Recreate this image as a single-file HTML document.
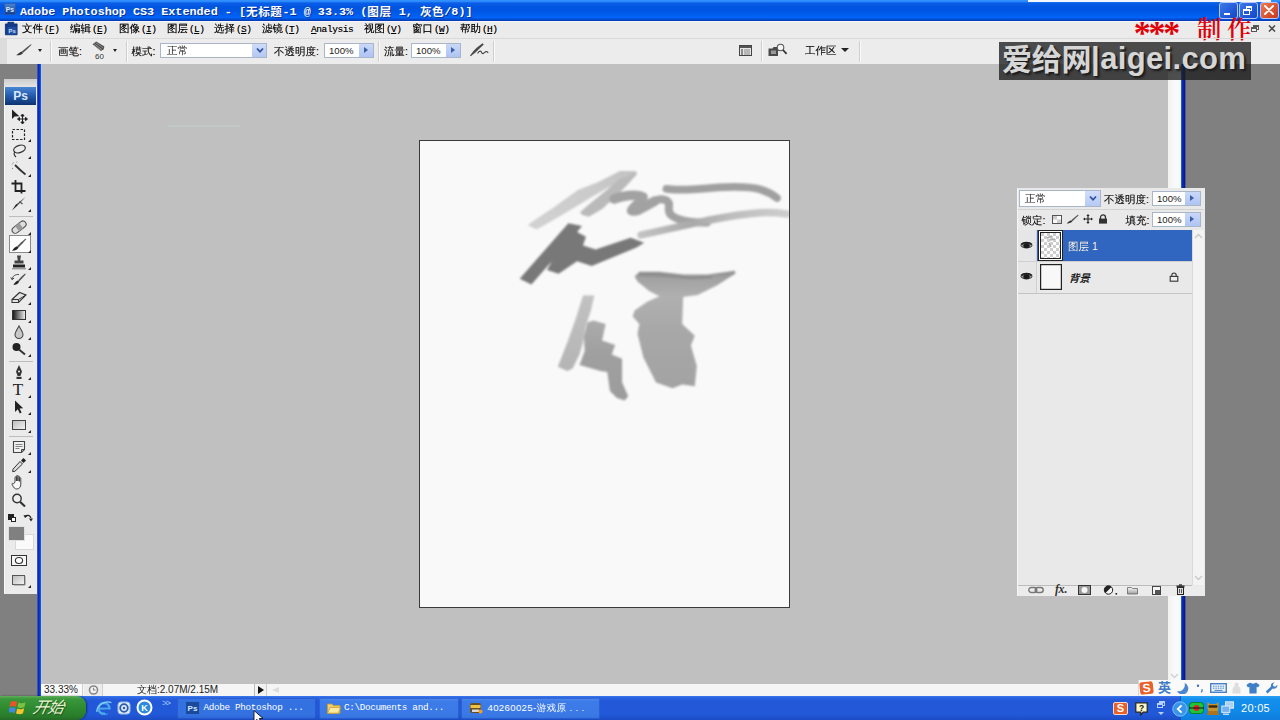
<!DOCTYPE html>
<html lang="zh-CN">
<head>
<meta charset="utf-8">
<title>Adobe Photoshop CS3 Extended</title>
<style>
html,body{margin:0;padding:0;}
body{width:1280px;height:720px;overflow:hidden;position:relative;background:#808080;
 font-family:"Liberation Sans","WenQuanYi Zen Hei","Noto Sans CJK SC",sans-serif;font-size:11px;color:#111;}
.abs{position:absolute;}
#titlebar{left:0;top:0;width:1280px;height:21px;background:linear-gradient(#3494ff 0,#2a88fb 1.5px,#0a5ee8 3px,#0054de 7px,#0058e6 12px,#0064f8 17.5px,#0450d8 19px,#0340b8 20.5px,#0340b8 21px);}
#titletext{left:20px;top:3px;height:17px;line-height:17px;color:#fff;font-family:"Liberation Mono","Noto Sans CJK SC",monospace;font-weight:bold;font-size:11.78px;white-space:nowrap;text-shadow:1px 1px 0 rgba(8,36,130,0.8);}
#titletext i{font-style:normal;font-size:11.6px;letter-spacing:0.6px;position:relative;top:1px;font-family:"Liberation Mono","Noto Sans CJK SC",monospace;font-weight:bold;}
#menubar{left:0;top:21px;width:1280px;height:17px;background:#ebebeb;border-top:1px solid #f6f6fc;box-sizing:border-box;}
#optbar{left:0;top:38px;width:1280px;height:26px;background:#ececec;}
#work{left:41px;top:64px;width:1127px;height:621px;background:#c0c0c0;}
#leftblue{left:37px;top:64px;width:5px;height:632px;background:linear-gradient(to right,#6e78b0 0,#0c2cb0 1px,#0628c0 2px,#0c4ad8 3px,#2a5ccc 4px,#b4c6e8 4.2px,#b8c8e4 5px);}
#rightscroll{left:1168px;top:64px;width:13px;height:621px;background:linear-gradient(to right,#f2f2ee 0,#f6f8fb 45%,#f8fcf6 70%,#eefcff 100%);}
#rightblue{left:1181px;top:64px;width:4.5px;height:632px;background:linear-gradient(to right,#4a6ad0 0,#0a2cb0 1.5px,#06209c 3px,#0a1c78 4px,#50588c 4.5px);}
#statusbar{left:41px;top:685px;width:1140px;height:11px;background:#f4f4f4;}
#taskbar{left:0;top:696px;width:1280px;height:24px;background:#2a62de;}
#doc{left:419px;top:140px;width:369px;height:466px;background:#f9f9f9;border:1px solid #3a3a3a;}
#toolbox{left:4px;top:79px;width:33px;height:514.5px;background:#ececec;}
#layers{left:1017px;top:188px;width:187px;height:408px;background:#e9e9e9;}

.t{position:absolute;white-space:nowrap;line-height:14px;height:14px;}
.mi,.ol,.lt{text-shadow:0 0 0.5px rgba(0,0,0,0.55);}
.mi{position:absolute;top:21px;height:14px;line-height:14px;font-size:10.5px;white-space:nowrap;color:#000;}
.mi b{font-weight:normal;font-family:"Liberation Mono","DejaVu Sans Mono",monospace;font-size:9.5px;letter-spacing:-0.6px;margin-left:1px;}
.mi u{text-decoration:underline;}
.ol{position:absolute;top:44px;height:14px;line-height:14px;font-size:10.5px;white-space:nowrap;color:#1a1a1a;}
.sep{position:absolute;top:41px;width:1px;height:21px;background:#cfcfcf;box-shadow:1px 0 0 #fafafa;}
.fld{position:absolute;top:43px;height:14px;background:#fff;border:1px solid #a9b6c9;box-sizing:border-box;height:15px;}
.fld .v{position:absolute;left:4px;top:0;line-height:13px;font-size:9.6px;color:#222;}
.fld .ab{position:absolute;right:0;top:0;bottom:0;width:14px;background:linear-gradient(#c9d8f8,#aec4f3);}
.fld .ab:after{content:"";position:absolute;left:5px;top:3px;border-left:4px solid #3a5ea8;border-top:3.5px solid transparent;border-bottom:3.5px solid transparent;}
.dd{position:absolute;width:0;height:0;border-top:3px solid #222;border-left:2.5px solid transparent;border-right:2.5px solid transparent;}
.wb{position:absolute;top:2px;width:18.5px;height:16.5px;border-radius:3px;box-sizing:border-box;border:1px solid #b4c8f6;}
</style>
</head>
<body>
<div id="titlebar" class="abs"></div>
<div id="titletext" class="abs">Adobe Photoshop CS3 Extended - [<i>无标题</i>-1 @ 33.3% (<i>图层</i> 1, <i>灰色</i>/8)]</div>
<div id="menubar" class="abs"></div>
<div id="optbar" class="abs"></div>

<div id="work" class="abs"></div>
<div id="leftblue" class="abs"></div>
<div id="rightscroll" class="abs"></div>
<div id="rightblue" class="abs"></div>
<div id="statusbar" class="abs"></div>
<div id="taskbar" class="abs"></div>
<div id="doc" class="abs"></div>
<div id="toolbox" class="abs"></div>
<div id="layers" class="abs"></div>

<!-- ===== painting on canvas ===== -->
<svg class="abs" style="left:420px;top:141px" width="369" height="466" viewBox="420 141 369 466">
<defs><filter id="bl" x="-5%" y="-5%" width="110%" height="110%"><feGaussianBlur stdDeviation="0.9"/></filter>
<filter id="bl2" x="-5%" y="-5%" width="110%" height="110%"><feGaussianBlur stdDeviation="1.4"/></filter>
<linearGradient id="ga" x1="0" y1="1" x2="1" y2="0"><stop offset="0" stop-color="#d2d2d2"/><stop offset="0.6" stop-color="#cbcbcb"/><stop offset="1" stop-color="#c2c2c2"/></linearGradient>
<linearGradient id="ge" x1="0" y1="0" x2="1" y2="0"><stop offset="0" stop-color="#c2c2c2"/><stop offset="0.35" stop-color="#a9a9a9"/><stop offset="0.6" stop-color="#bcbcbc"/><stop offset="1" stop-color="#cdcdcd"/></linearGradient>
<linearGradient id="gg" x1="0" y1="0" x2="0" y2="1"><stop offset="0" stop-color="#8e8e8e"/><stop offset="0.3" stop-color="#a2a2a2"/><stop offset="1" stop-color="#b0b0b0"/></linearGradient>
<linearGradient id="gj" x1="0" y1="0" x2="0" y2="1"><stop offset="0" stop-color="#ababab"/><stop offset="0.4" stop-color="#a0a0a0"/><stop offset="1" stop-color="#9c9c9c"/></linearGradient>
<linearGradient id="gh" x1="0" y1="0" x2="0" y2="1"><stop offset="0" stop-color="#b0b0b0"/><stop offset="0.35" stop-color="#a8a8a8"/><stop offset="1" stop-color="#a3a3a3"/></linearGradient>
<linearGradient id="gi" x1="0" y1="0" x2="0" y2="1"><stop offset="0" stop-color="#c2c2c2"/><stop offset="1" stop-color="#b4b4b4"/></linearGradient>
</defs>
<g filter="url(#bl)">
<path d="M528.9 223.9L553.3 207.8L577.8 190L597.8 182.2L620 171.1L635.6 171.1L637 174L607.8 187.8L592.2 196.7L577.8 205.6L558.9 216.7L536.7 229.4L528.3 225.6z" fill="url(#ga)"/>
<path d="M580 212.2L588.9 204.4L607.8 188.9L620 178.9L636.7 172.2L636.7 174.4L626.7 185.6L616.7 195.6L602.2 208.9L588.9 216.7L582.2 215z" fill="#bababa"/>
<path d="M614 199C622 196 636 193.5 643 197C642 201 634 206 631.5 210.5C636 213 644 207 655 201" fill="none" stroke="#a2a2a2" stroke-width="9.5" stroke-linejoin="round" stroke-linecap="round"/>
<path d="M655 201C660 198.5 667 198.5 669 203.5C669.5 208 667 211 671 215C677 220 690 222.6 707 222.6" fill="none" stroke="#a2a2a2" stroke-width="8" stroke-linejoin="round" stroke-linecap="round"/>
<path d="M666.5 188.8C675 190.5 690 190 718.5 187.4C735 186.5 750 186.7 760.5 189.5C767 191.5 772 194 777 198" fill="none" stroke="#a0a0a0" stroke-width="7.7" stroke-linecap="round"/>
<path d="M641 235C655 232 676 227.5 707 220.5C730 216 748 213.5 760.5 212.7C770 212.3 780 213 787 214" fill="none" stroke="url(#ge)" stroke-width="7.4" stroke-linecap="round"/>
<path d="M519.7 278.7L568.4 223.2L582 226.1L577.1 232L585.9 236.8L583 245.6L595.6 249.5L630.6 237.8L644.2 242.7L636.5 247.5L591.7 266L577.1 261.2L558.6 273.8L547 269.9L551.8 261.2L531.4 284.5z" fill="#787878"/>
<path d="M634.6 276.5L639.4 271.7L658.9 271.7L684.1 274.6L707.4 274.6L734.7 270.7L735.6 273.6L717.2 285.3L697.7 295L682.2 296.9L660.8 296.9L649.1 291.1L637.5 281.4z" fill="url(#gg)"/>
<path d="M639 274.5L660 275L690 278L712 277" fill="none" stroke="#8c8c8c" stroke-width="2.6"/>
<path d="M658.9 296.5L683.2 296.5L682.2 324.1L694.8 335.8L690.9 345.5L696.8 365.9L694.8 386.3L682.2 384.4L672.5 388.3L656 382.4L643.3 357.2L637.5 333.8L639.4 324.1L632.6 316.4L634.6 310.5L647.2 301.8z" fill="url(#gh)"/>
<path d="M583 295.4L594.3 295.4L590.8 311L585.6 326.7L583 342.3L579.5 354.5L572.6 368.4L567.4 371L557.8 366.7L567.4 342.3L576 318z" fill="url(#gi)"/>
<path d="M587.4 322.4L593.4 320.6L605.6 324.1L602.1 340.6L615.2 344.9L611.7 354.5L622.1 358.8L622.1 382.3L628.2 396.2L624.7 400.5L616.9 397.9L609.9 391L607.3 371.9L600.4 371L579.5 364.9L584.7 351L583.9 337.1z" fill="url(#gj)"/>
</g>
</svg>


<!-- ===== toolbox ===== -->
<style>
#toolbox{background:#ebebeb;border-left:1px solid #f8f8f8;box-sizing:border-box;}
.tl{position:absolute;left:4px;width:33px;height:18px;}
.tl svg{position:absolute;left:6px;top:1px;}
.tri{position:absolute;left:24px;top:14px;width:0;height:0;border-bottom:3px solid #222;border-left:3px solid transparent;}
.tsep{position:absolute;left:9px;width:24px;height:1px;background:#bdbdbd;}
</style>
<div class="abs" style="left:4px;top:79px;width:33px;height:8px;background:linear-gradient(#cdcdcd,#e4e4e4)"></div>
<div class="abs" style="left:5px;top:87px;width:31px;height:18px;background:linear-gradient(#4a86d2 0,#2a62b4 40%,#17468f 75%,#0e3270 100%);"></div>
<div class="abs" style="left:5px;top:87px;width:31px;height:18px;line-height:18px;text-align:center;color:#dbe8fc;font-weight:bold;font-size:12px;font-family:'Liberation Sans',sans-serif;">Ps</div>

<div class="tl" style="top:107px"><svg width="18" height="16" viewBox="0 0 18 16"><path d="M2 1.5L2 11L4.6 8.6L9.4 8.2z" fill="#222"/><path d="M12.5 7v8M8.5 11h8M12.5 6l-1.6 2h3.2zM12.5 16l-1.6-2h3.2zM7.5 11l2-1.6v3.2zM17.5 11l-2-1.6v3.2z" stroke="#222" stroke-width="1" fill="#222"/></svg></div>
<div class="tl" style="top:125px"><svg width="18" height="16" viewBox="0 0 18 16"><rect x="2.5" y="3.5" width="12" height="10" fill="none" stroke="#222" stroke-width="1.2" stroke-dasharray="2.4 1.6"/></svg><div class="tri"></div></div>
<div class="tl" style="top:142px"><svg width="18" height="16" viewBox="0 0 18 16"><ellipse cx="9.5" cy="6" rx="6" ry="3.6" fill="none" stroke="#333" stroke-width="1.2" transform="rotate(-18 9.5 6)"/><path d="M5 8.5C3.5 10.5 4 12.5 6 14" fill="none" stroke="#333" stroke-width="1.2"/></svg><div class="tri"></div></div>
<div class="tl" style="top:160px"><svg width="18" height="16" viewBox="0 0 18 16"><path d="M5 4C8 7 11 10 15.5 13.5" fill="none" stroke="#333" stroke-width="1.8"/><path d="M2 3.5L4 1M3 7L1.5 8.5M6.5 1.5L7 0.5" stroke="#888" stroke-width="1" stroke-dasharray="1.5 1"/></svg><div class="tri"></div></div>
<div class="tl" style="top:178px"><svg width="18" height="16" viewBox="0 0 18 16"><path d="M5.5 1v11h10M1.5 4.5h10v10" fill="none" stroke="#222" stroke-width="1.8"/></svg></div>
<div class="tl" style="top:195px"><svg width="18" height="16" viewBox="0 0 18 16"><path d="M15.5 1L8 9L6.5 8.2z" fill="#444"/><path d="M8 9L2 14.5L6.2 8z" fill="#222"/><path d="M9.5 5.5L12.5 8" stroke="#555" stroke-width="1.2"/></svg><div class="tri"></div></div>
<div class="tsep" style="top:216px"></div>
<div class="tl" style="top:218px"><svg width="18" height="16" viewBox="0 0 18 16"><rect x="1" y="5" width="16" height="6.4" rx="3.2" fill="#ddd" stroke="#555" stroke-width="1.1" transform="rotate(-38 9 8)"/><rect x="6.5" y="5" width="5" height="6.4" fill="#999" transform="rotate(-38 9 8)"/></svg><div class="tri"></div></div>
<div class="abs" style="left:9px;top:235px;width:22px;height:18px;background:#fdfdfd;border:1px solid #8a8a8a;box-sizing:border-box"></div>
<div class="tl" style="top:236px"><svg width="18" height="16" viewBox="0 0 18 16"><path d="M15.5 1.5C12 4.5 9.5 6.8 7.2 9.2L8.6 10.4C11 8 13.4 5.4 16.2 2.2z" fill="#555"/><path d="M7 9.2C5.2 9.8 3.6 11.4 2 13.8 4.8 14 7.2 12.8 8.6 10.5z" fill="#222"/></svg><div class="tri"></div></div>
<div class="tl" style="top:253px"><svg width="18" height="16" viewBox="0 0 18 16"><path d="M7 1.5h4l-0.8 5h3.3v3h-9v-3h3.3z" fill="#444"/><rect x="3" y="10.5" width="12" height="3" fill="#222"/><path d="M2 14.8h14" stroke="#777" stroke-width="1"/></svg><div class="tri"></div></div>
<div class="tl" style="top:271px"><svg width="18" height="16" viewBox="0 0 18 16"><path d="M15 1.5C12 4 10 6 8 8.6L9.2 9.6C11.4 7.2 13.4 5 15.8 2.2z" fill="#555"/><path d="M7.8 8.6C6 9.4 4.6 10.8 3.4 13 5.8 13 8 12 9.2 9.8z" fill="#222"/><path d="M2 7.5C2.5 4 5.5 2 9 2.6M2 7.5L0.8 5.4M2 7.5L4 6.2" fill="none" stroke="#444" stroke-width="1"/></svg><div class="tri"></div></div>
<div class="tl" style="top:288px"><svg width="18" height="16" viewBox="0 0 18 16"><path d="M2 10.5L9.5 3.5L16 6L8.5 13.5L2 13.5z" fill="#e4e4e4" stroke="#333" stroke-width="1.1"/><path d="M2 10.5L8.5 10.5L8.5 13.5M8.5 10.5L16 6" fill="none" stroke="#333" stroke-width="1"/></svg><div class="tri"></div></div>
<div class="tl" style="top:306px"><svg width="18" height="16" viewBox="0 0 18 16"><defs><linearGradient id="tg" x1="0" y1="0" x2="1" y2="0"><stop offset="0" stop-color="#111"/><stop offset="1" stop-color="#f4f4f4"/></linearGradient></defs><rect x="2.5" y="3.5" width="13" height="9" fill="url(#tg)" stroke="#333"/></svg><div class="tri"></div></div>
<div class="tl" style="top:323px"><svg width="18" height="16" viewBox="0 0 18 16"><path d="M9 2C11 6 13 8 13 10.5A4 4 0 0 1 5 10.5C5 8 7 6 9 2z" fill="#c8c8c8" stroke="#444" stroke-width="1.1"/></svg><div class="tri"></div></div>
<div class="tl" style="top:340px"><svg width="18" height="16" viewBox="0 0 18 16"><circle cx="6.5" cy="6" r="4" fill="#222"/><path d="M9 8.5L15 13.5" stroke="#333" stroke-width="2"/></svg><div class="tri"></div></div>
<div class="tsep" style="top:361px"></div>
<div class="tl" style="top:363px"><svg width="18" height="16" viewBox="0 0 18 16"><path d="M9 1L12 7.5L10.4 12h-2.8L6 7.5z" fill="#333"/><circle cx="9" cy="7.6" r="1" fill="#eee"/><rect x="6.5" y="12.8" width="5" height="2.2" fill="#333"/></svg><div class="tri"></div></div>
<div class="tl" style="top:381px"><div class="abs" style="left:5px;top:0;width:18px;height:18px;line-height:18px;text-align:center;font-family:'Liberation Serif',serif;font-size:17px;color:#222;">T</div><div class="tri"></div></div>
<div class="tl" style="top:398px"><svg width="18" height="16" viewBox="0 0 18 16"><path d="M5 1.5L5 13L7.8 10.2L9.8 14.5L11.6 13.6L9.6 9.5L13.2 9.2z" fill="#222"/></svg><div class="tri"></div></div>
<div class="tl" style="top:416px"><svg width="18" height="16" viewBox="0 0 18 16"><defs><linearGradient id="tr" x1="0" y1="0" x2="1" y2="1"><stop offset="0" stop-color="#bbb"/><stop offset="1" stop-color="#f4f4f4"/></linearGradient></defs><rect x="2.5" y="3.5" width="13" height="9" fill="url(#tr)" stroke="#444"/></svg><div class="tri"></div></div>
<div class="tsep" style="top:436px"></div>
<div class="tl" style="top:438px"><svg width="18" height="16" viewBox="0 0 18 16"><path d="M3.5 2.5h11v8l-3 3h-8z" fill="#f0f0f0" stroke="#444" stroke-width="1.1"/><path d="M5.5 5.5h7M5.5 7.5h7M5.5 9.5h4" stroke="#777" stroke-width="0.9"/><path d="M14.5 10.5h-3v3" fill="none" stroke="#444"/></svg><div class="tri"></div></div>
<div class="tl" style="top:456px"><svg width="18" height="16" viewBox="0 0 18 16"><path d="M11 3.5L13.5 1L16 3.5L13.5 6z" fill="#222"/><path d="M10 4.5L12.5 7L5 14.2L2.6 14.6L3 12.2z" fill="#ddd" stroke="#333" stroke-width="1"/></svg><div class="tri"></div></div>
<div class="tl" style="top:473px"><svg width="18" height="16" viewBox="0 0 18 16"><path d="M5 8V3.5c0-1 1.4-1 1.4 0V7V2.2c0-1 1.5-1 1.5 0V7V2.8c0-1 1.5-1 1.5 0V7.4V4.4c0-1 1.4-1 1.4 0V10c0 3-1.4 5-4 5c-2.2 0-3-1.2-4.6-4.4c-0.6-1.2 0.6-1.8 1.4-0.8z" fill="#f8f8f8" stroke="#333" stroke-width="0.9"/></svg></div>
<div class="tl" style="top:491px"><svg width="18" height="16" viewBox="0 0 18 16"><circle cx="7" cy="6.5" r="4.2" fill="#eee" stroke="#333" stroke-width="1.4"/><path d="M10 9.8L15 14.5" stroke="#333" stroke-width="2.2"/></svg></div>
<div class="abs" style="left:8px;top:513.5px;width:6px;height:6px;background:#222"></div><div class="abs" style="left:11px;top:516.5px;width:5px;height:5px;background:#fff;border:1px solid #222;box-sizing:border-box"></div>
<svg class="abs" style="left:23px;top:512.5px" width="10" height="10" viewBox="0 0 10 10"><path d="M2 3.5C4 1.5 7 2 8 5" fill="none" stroke="#222" stroke-width="1.2"/><path d="M0.5 2L2 5L4.5 3zM6 5.5h4l-2 3z" fill="#222"/></svg>
<div class="abs" style="left:15px;top:534px;width:19px;height:16px;background:#fafafa;border:1px solid #d8d8d8;box-sizing:border-box"></div>
<div class="abs" style="left:8px;top:526px;width:17px;height:15px;background:#808080;border:1px solid #e0e0e0;box-sizing:border-box"></div>
<div class="tl" style="top:551px"><svg width="18" height="16" viewBox="0 0 18 16"><rect x="1.5" y="3.5" width="15" height="10" fill="#f6f6f6" stroke="#333"/><ellipse cx="9" cy="8.5" rx="3.6" ry="3" fill="#fff" stroke="#333" stroke-width="1.1"/></svg></div>
<div class="tl" style="top:571px"><svg width="18" height="16" viewBox="0 0 18 16"><rect x="2.5" y="3.5" width="12" height="9" fill="url(#tr)" stroke="#555"/><path d="M15 4.5v8.5h-11" fill="none" stroke="#888" stroke-width="1"/></svg><div class="tri"></div></div>


<!-- ===== layers panel ===== -->
<style>
#layers{left:1017px;top:188px;width:188px;height:408px;background:#e9e9e9;border-left:1px solid #f6f6f6;box-sizing:border-box;}
.lt{position:absolute;white-space:nowrap;font-size:10.5px;line-height:14px;height:14px;color:#1a1a1a;}
.lf{position:absolute;height:15px;background:#fff;border:1px solid #a9b6c9;box-sizing:border-box;}
.lf .v{position:absolute;left:4px;top:0;line-height:13px;font-size:9.6px;color:#222;}
.lf .ab{position:absolute;right:0;top:0;bottom:0;width:15px;background:linear-gradient(#c9d8f8,#aec4f3);}
.fld .nod:after,.lf .nod:after{display:none !important;}
.lf .ab:after{content:"";position:absolute;left:5px;top:3px;border-left:4px solid #3a5ea8;border-top:3.5px solid transparent;border-bottom:3.5px solid transparent;}
</style>
<div class="lf" style="left:1019px;top:190px;width:82px;height:17px"><span class="v" style="left:5px;top:1px;font-size:10.5px">正常</span><div class="ab nod" style="width:15px;background:linear-gradient(#d2defa,#b6c9f4)"></div></div>
<svg class="abs" style="left:1089px;top:195px" width="8" height="7" viewBox="0 0 8 7"><path d="M1 1.5L4 4.8L7 1.5" fill="none" stroke="#2c4f9e" stroke-width="1.7"/></svg>
<div class="lt" style="left:1104px;top:191.5px">不透明度:</div>
<div class="lf" style="left:1152px;top:190.5px;width:49px"><span class="v">100%</span><div class="ab"></div></div>
<div class="abs" style="left:1018px;top:208.5px;width:186px;height:1px;background:#d2d2d2"></div>
<div class="lt" style="left:1021.5px;top:213px">锁定:</div>
<svg class="abs" style="left:1052px;top:215px" width="10" height="9" viewBox="0 0 10 9"><rect x="0.5" y="0.5" width="9" height="8" fill="#fafafa" stroke="#555"/><rect x="1" y="1" width="4" height="3.5" fill="#ccc"/><rect x="5" y="4.5" width="4" height="3.5" fill="#ccc"/></svg>
<svg class="abs" style="left:1066px;top:214px" width="13" height="10" viewBox="0 0 13 10"><path d="M12 0.8C9 3 7 4.6 5.4 6.2L6.4 7.2C8.2 5.6 10.2 3.6 12.6 1.4z" fill="#555"/><path d="M5.2 6.2C3.6 6.6 2.2 7.8 0.8 9.4 3.2 9.6 5.2 8.8 6.4 7.3z" fill="#333"/></svg>
<svg class="abs" style="left:1083px;top:214px" width="10" height="10" viewBox="0 0 10 10"><path d="M5 1v8M1 5h8" stroke="#222" stroke-width="1.2"/><path d="M5 0L3.4 2h3.2zM5 10L3.4 8h3.2zM0 5l2-1.6v3.2zM10 5l-2-1.6v3.2z" fill="#222"/></svg>
<svg class="abs" style="left:1098px;top:214px" width="10" height="10" viewBox="0 0 10 10"><path d="M2.5 5V3.4a2.5 2.5 0 0 1 5 0V5" fill="none" stroke="#333" stroke-width="1.3"/><rect x="1" y="4.6" width="8" height="5" fill="#333"/></svg>
<div class="lt" style="left:1125.5px;top:213px">填充:</div>
<div class="lf" style="left:1152px;top:212px;width:49px"><span class="v">100%</span><div class="ab"></div></div>
<div class="abs" style="left:1018px;top:229.5px;width:186px;height:1px;background:#d6d6d6"></div>
<!-- rows -->
<div class="abs" style="left:1037px;top:230px;width:155px;height:31px;background:#3166c0"></div>
<div class="abs" style="left:1018px;top:230px;width:19px;height:64px;background:#e6e6e6;border-right:1px solid #cfcfcf;box-sizing:border-box"></div>
<div class="abs" style="left:1018px;top:260.5px;width:174px;height:1px;background:#d0d0d0"></div>
<div class="abs" style="left:1018px;top:293px;width:174px;height:1px;background:#c4c4c4"></div>
<svg class="abs" style="left:1020px;top:241px" width="13" height="9" viewBox="0 0 13 9"><path d="M0.8 4.8C3 1.4 10 1.4 12.2 4.8C10 7.6 3 7.6 0.8 4.8z" fill="#9a9a9a" stroke="#333" stroke-width="0.9"/><ellipse cx="6.5" cy="4.7" rx="3.2" ry="2.5" fill="#1a1a1a"/><path d="M1 3.6C3.5 0.8 9.5 0.8 12 3.6" fill="none" stroke="#1a1a1a" stroke-width="1.5"/></svg>
<svg class="abs" style="left:1020px;top:272px" width="13" height="9" viewBox="0 0 13 9"><path d="M0.8 4.8C3 1.4 10 1.4 12.2 4.8C10 7.6 3 7.6 0.8 4.8z" fill="#9a9a9a" stroke="#333" stroke-width="0.9"/><ellipse cx="6.5" cy="4.7" rx="3.2" ry="2.5" fill="#1a1a1a"/><path d="M1 3.6C3.5 0.8 9.5 0.8 12 3.6" fill="none" stroke="#1a1a1a" stroke-width="1.5"/></svg>
<svg class="abs" style="left:1038px;top:230px" width="25" height="31" viewBox="0 0 25 31"><defs><pattern id="chk" width="6" height="6" patternUnits="userSpaceOnUse"><rect width="6" height="6" fill="#fff"/><rect width="3" height="3" fill="#cdcdcd"/><rect x="3" y="3" width="3" height="3" fill="#cdcdcd"/></pattern></defs><rect x="0.5" y="0.5" width="24" height="30" fill="#fff" stroke="#222"/><rect x="2.5" y="2.5" width="20" height="26" fill="url(#chk)" stroke="#222"/><path d="M9 8l5-2M12 10l5-1M11 13l2 4" stroke="#aaa" stroke-width="1.5"/></svg>
<svg class="abs" style="left:1040px;top:264px" width="22" height="26" viewBox="0 0 22 26"><rect x="0.6" y="0.6" width="20.8" height="24.8" fill="#f8f8f8" stroke="#222" stroke-width="1.2"/></svg>
<div class="lt" style="left:1068px;top:239px;color:#fff;font-size:10.5px">图层 1</div>
<div class="lt" style="left:1069.5px;top:270.5px;font-size:10.5px;font-family:'Liberation Sans','Noto Sans CJK SC',sans-serif;font-weight:500"><span style="display:inline-block;transform:skewX(-16deg)">背景</span></div>
<svg class="abs" style="left:1169px;top:272px" width="10" height="10" viewBox="0 0 10 10"><path d="M2.8 4.5V3.2a2.2 2.2 0 0 1 4.4 0V4.5" fill="none" stroke="#333" stroke-width="1.1"/><rect x="1.2" y="4.4" width="7.6" height="4.8" fill="#eee" stroke="#333" stroke-width="1.1"/></svg>
<!-- panel scrollbar -->
<div class="abs" style="left:1192px;top:230px;width:12px;height:355px;background:#f3f3f3;border-left:1px solid #dadada;box-sizing:border-box"></div>
<svg class="abs" style="left:1194px;top:233px" width="9" height="7" viewBox="0 0 9 7"><path d="M1 5L4.5 1.5L8 5" fill="none" stroke="#c9c9c9" stroke-width="1.4"/></svg>
<svg class="abs" style="left:1194px;top:574px" width="9" height="7" viewBox="0 0 9 7"><path d="M1 2L4.5 5.5L8 2" fill="none" stroke="#c9c9c9" stroke-width="1.4"/></svg>
<!-- footer -->
<div class="abs" style="left:1018px;top:584.5px;width:174px;height:1px;background:#bcbcbc"></div>
<div class="abs" style="left:1018px;top:585.5px;width:187px;height:10.5px;background:#ececec"></div>
<svg class="abs" style="left:1028px;top:586px" width="16" height="8" viewBox="0 0 16 8"><rect x="0.8" y="1.5" width="8" height="5" rx="2.5" fill="none" stroke="#777" stroke-width="1.4"/><rect x="7.2" y="1.5" width="8" height="5" rx="2.5" fill="none" stroke="#777" stroke-width="1.4"/></svg>
<div class="abs" style="left:1055px;top:582px;font-family:'Liberation Serif',serif;font-style:italic;font-weight:bold;font-size:12px;line-height:14px;color:#333;letter-spacing:-0.5px">fx<span style="font-style:normal">.</span></div>
<svg class="abs" style="left:1078px;top:585px" width="13" height="10" viewBox="0 0 13 10"><rect x="0.5" y="0.5" width="12" height="9" fill="#999" stroke="#333"/><circle cx="6.5" cy="5" r="3" fill="#f6f6f6"/></svg>
<svg class="abs" style="left:1103px;top:585px" width="16" height="10" viewBox="0 0 16 10"><circle cx="5.5" cy="5" r="4.2" fill="#f6f6f6" stroke="#222" stroke-width="1"/><path d="M2.5 8A4.2 4.2 0 0 1 8.5 2z" fill="#222"/><rect x="12.5" y="8" width="1.6" height="1.6" fill="#222"/></svg>
<svg class="abs" style="left:1127px;top:585px" width="11" height="10" viewBox="0 0 11 10"><defs><linearGradient id="fg" x1="0" y1="0" x2="0" y2="1"><stop offset="0" stop-color="#fafafa"/><stop offset="1" stop-color="#9c9c9c"/></linearGradient></defs><path d="M0.5 2.5h4l1 1h5v5.5h-10z" fill="url(#fg)" stroke="#666" stroke-width="0.8"/></svg>
<svg class="abs" style="left:1152px;top:585px" width="9" height="10" viewBox="0 0 9 10"><rect x="0.5" y="1.5" width="8" height="8" fill="#f4f4f4" stroke="#444"/><rect x="3" y="5" width="5" height="4" fill="#555"/></svg>
<svg class="abs" style="left:1176px;top:584px" width="9" height="11" viewBox="0 0 9 11"><rect x="1.5" y="3.5" width="6" height="7" fill="#ddd" stroke="#222"/><rect x="0.5" y="1.5" width="8" height="2" fill="#333"/><rect x="3" y="0.3" width="3" height="1.4" fill="#333"/><path d="M3.5 5v4M5.5 5v4" stroke="#333" stroke-width="0.8"/></svg>


<!-- ===== status bar / scrollbars ===== -->
<style>
#statusbar{left:41px;top:684px;width:1127px;height:12px;background:#f5f5f5;}
.sb{position:absolute;top:684px;height:12px;line-height:12px;font-size:9.5px;color:#222;white-space:nowrap;}
.tb{position:absolute;top:698px;height:21px;border-radius:2px;background:linear-gradient(#5590f0 0,#3d7ce8 3px,#3b7ae6 16px,#3472de 21px);box-shadow:inset 0 0 0 1px rgba(30,70,190,0.5);}
.tbt{position:absolute;top:701px;height:14px;line-height:14px;color:#fff;font-family:"Liberation Mono","WenQuanYi Zen Hei","Noto Sans CJK SC",monospace;font-size:9.3px;letter-spacing:-0.32px;white-space:nowrap;}
</style>
<div class="abs" style="left:41px;top:684px;width:42px;height:12px;background:#fbfbfb;border-right:1px solid #cfcfcf;box-sizing:border-box"></div>
<div class="sb" style="left:44px;font-size:10px">33.33%</div>
<div class="abs" style="left:84px;top:684px;width:19px;height:12px;background:#ececec;border-right:1px solid #cfcfcf;box-sizing:border-box"></div>
<svg class="abs" style="left:88px;top:685px" width="11" height="10" viewBox="0 0 11 10"><circle cx="5.5" cy="5" r="4" fill="#f2f2f2" stroke="#888" stroke-width="1.6"/><path d="M5.5 2.8V5H7.6" fill="none" stroke="#888" stroke-width="1.1"/></svg>
<div class="sb" style="left:137px;font-size:10px">文档:2.07M/2.15M</div>
<div class="abs" style="left:254px;top:684px;width:13px;height:12px;background:#f2f2f2;border-left:1px solid #bbb;border-right:1px solid #ccc;box-sizing:border-box"></div>
<div class="abs" style="left:258px;top:686px;width:0;height:0;border-left:6px solid #111;border-top:4px solid transparent;border-bottom:4px solid transparent"></div>
<div class="abs" style="left:272px;top:686.5px;width:0;height:0;border-right:7px solid #dcdcdc;border-top:3.5px solid transparent;border-bottom:3.5px solid transparent"></div>
<!-- right scrollbar arrows -->
<svg class="abs" style="left:1170px;top:672px" width="9" height="7" viewBox="0 0 9 7"><path d="M1 2L4.5 5.5L8 2" fill="none" stroke="#d0d0d0" stroke-width="1.4"/></svg>
<div class="abs" style="left:1168px;top:680px;width:13px;height:16px;background:#f0f0f0"></div>

<!-- ===== taskbar ===== -->
<style>
#taskbar{left:0;top:696px;width:1280px;height:24px;background:linear-gradient(#3a78ec 0,#2a62e0 2px,#2258d8 5px,#2259d9 18px,#1c4cc4 24px);}
</style>
<div class="abs" style="left:0;top:696px;width:86px;height:24px;border-radius:0 9px 9px 0;background:linear-gradient(#5fae5a 0,#3a973a 3px,#2f8a30 12px,#2a7c2b 20px,#246b25 24px);box-shadow:1px 0 2px rgba(0,0,40,0.5)"></div>
<svg class="abs" style="left:9px;top:699px" width="19" height="17" viewBox="0 0 19 17"><path d="M1.5 3.2C4 1.6 6 1.8 8.2 3L7 8C5 6.8 3 6.8 0.4 8z" fill="#e8542c"/><path d="M9.6 3.4C12 4.6 14 4.6 16.6 3.2L15.4 8C13 9.4 10.8 9.2 8.4 8.2z" fill="#7cc242"/><path d="M0.2 9.2C2.6 8 4.8 8.2 6.8 9.2L5.6 14.2C3.6 13 1.4 13 -1 14.2z" fill="#3f8ae0"/><path d="M8.2 9.6C10.6 10.6 12.8 10.6 15.2 9.2L14 14.2C11.6 15.6 9.4 15.4 7 14.4z" fill="#f6c32c"/></svg>
<div class="abs" style="left:33px;top:697px;height:22px;line-height:22px;color:#e8f4d0;font-size:16px;font-style:italic;font-family:'Liberation Sans','Noto Sans CJK SC',sans-serif;white-space:nowrap;text-shadow:1px 1px 1px #1c4c1c;"><span style="display:inline-block;transform:skewX(-12deg);letter-spacing:-1px">开始</span></div>
<!-- quick launch -->
<svg class="abs" style="left:96px;top:700px" width="16" height="16" viewBox="0 0 16 16"><circle cx="8" cy="8.4" r="5.4" fill="none" stroke="#49a8ea" stroke-width="2.6"/><path d="M3.5 8.6h9.4" stroke="#49a8ea" stroke-width="2"/><path d="M1 12C0 6 9 0 15.4 2.6" fill="none" stroke="#8fd0f8" stroke-width="1.2"/><rect x="9" y="9.6" width="6" height="4" fill="#2258d8"/></svg>
<svg class="abs" style="left:116px;top:700px" width="16" height="16" viewBox="0 0 16 16"><rect x="2" y="2" width="12" height="12" rx="3" fill="#dceaf8" stroke="#9cc0e8"/><circle cx="8" cy="8" r="3.8" fill="none" stroke="#2a5aa8" stroke-width="1.8"/><circle cx="8" cy="8" r="1.2" fill="#2a5aa8"/></svg>
<svg class="abs" style="left:136px;top:699px" width="17" height="17" viewBox="0 0 17 17"><circle cx="8.5" cy="8.5" r="7" fill="#2a8ae0" stroke="#fff" stroke-width="2"/><text x="8.5" y="12" font-family="Liberation Sans, sans-serif" font-weight="bold" font-size="9" fill="#fff" text-anchor="middle">K</text></svg>
<div class="abs" style="left:162px;top:698px;color:#9cc4ff;font-size:9px;line-height:10px;letter-spacing:-1.5px;font-family:'Liberation Sans',sans-serif">&gt;&gt;</div>
<!-- task buttons -->
<div class="tb" style="left:177px;width:139px;background:linear-gradient(#3c78e6 0,#3370e0 3px,#3472e2 16px,#2c66d6 21px)"></div>
<svg class="abs" style="left:186px;top:702px" width="13" height="12" viewBox="0 0 13 12"><rect x="0" y="0" width="13" height="12" fill="#1c4a9a"/><text x="6.5" y="9" font-family="Liberation Sans, sans-serif" font-weight="bold" font-size="8" fill="#d8e6ff" text-anchor="middle">Ps</text></svg>
<div class="tbt" style="left:203.5px">Adobe Photoshop ...</div>
<div class="tb" style="left:319px;width:140px"></div>
<svg class="abs" style="left:327px;top:702px" width="14" height="12" viewBox="0 0 14 12"><path d="M0.5 2h4.5l1.2 1.6h6.8v7.6h-12.5z" fill="#f4d070" stroke="#c89a28" stroke-width="0.8"/><path d="M0.5 11.2L3 5.4h10.4l-2 5.8z" fill="#fbe9a0" stroke="#c89a28" stroke-width="0.8"/></svg>
<div class="tbt" style="left:344px">C:\Documents and...</div>
<div class="tb" style="left:461px;width:139px"></div>
<svg class="abs" style="left:469px;top:701px" width="14" height="14" viewBox="0 0 14 14"><rect x="1" y="2" width="11" height="10" rx="2" fill="#6a5020"/><rect x="1.5" y="4" width="10" height="3" fill="#f0c040"/><rect x="3" y="8.5" width="7" height="2.5" fill="#d8d8d8"/><circle cx="11.5" cy="10.5" r="2" fill="#f0a020"/></svg>
<div class="tbt" style="left:487.5px;font-size:9.6px;font-family:'Liberation Sans','WenQuanYi Zen Hei','Noto Sans CJK SC',sans-serif;letter-spacing:0.35px">40260025-游戏原 . . .</div>
<!-- tray -->
<div class="abs" style="left:1180px;top:696px;width:100px;height:24px;background:linear-gradient(#2aa0f4 0,#1490ec 3px,#108ae8 14px,#0f7ede 24px);border-left:1px solid #0a58c0;box-sizing:border-box"></div>
<svg class="abs" style="left:1113px;top:702px" width="15" height="13" viewBox="0 0 15 13"><rect x="0.5" y="0.5" width="14" height="12" rx="1.5" fill="#e8602a" stroke="#f6d8c8" stroke-width="1"/><text x="7.5" y="10.4" font-family="Liberation Sans, sans-serif" font-weight="bold" font-size="11" fill="#fff" text-anchor="middle">S</text></svg>
<svg class="abs" style="left:1135px;top:702px" width="13" height="14" viewBox="0 0 13 14"><path d="M0.8 0.8h11.4v9.4h-4l-2.4 3v-3h-5z" fill="#fbf6c8" stroke="#222" stroke-width="1.2"/><text x="6.5" y="8.8" font-family="Liberation Sans, sans-serif" font-weight="bold" font-size="8.5" fill="#111" text-anchor="middle">?</text></svg>
<div class="abs" style="left:1159px;top:701px;width:6px;height:5px;border:1px solid #b8d0ff;border-top-width:2px;box-sizing:border-box"></div>
<div class="abs" style="left:1157px;top:703px;width:6px;height:5px;border:1px solid #b8d0ff;border-top-width:2px;box-sizing:border-box;background:#2258d8"></div>
<div class="abs" style="left:1158px;top:712px;width:0;height:0;border-top:3px solid #b8d0ff;border-left:3px solid transparent;border-right:3px solid transparent"></div>
<svg class="abs" style="left:1172px;top:701px" width="16" height="16" viewBox="0 0 16 16"><circle cx="8" cy="8" r="7.2" fill="#3a94ea" stroke="#7cc0f8" stroke-width="1"/><path d="M9.6 4.4L5.8 8L9.6 11.6" fill="none" stroke="#fff" stroke-width="1.8"/></svg>
<svg class="abs" style="left:1189px;top:702px" width="15" height="12" viewBox="0 0 15 12"><rect x="0.5" y="0.5" width="14" height="11" rx="3" fill="#18c838" stroke="#0a7a20"/><circle cx="7.5" cy="6" r="3" fill="#e81c2c"/><path d="M0 6h15" stroke="#111" stroke-width="1"/></svg>
<svg class="abs" style="left:1206px;top:700px" width="14" height="16" viewBox="0 0 14 16"><path d="M1.5 2L4 4h6l2.5-2v6a5.5 5.5 0 0 1-11 0z" fill="#c8922c"/><rect x="2.5" y="5.2" width="9" height="2.6" rx="1" fill="#3a2a10"/><path d="M2 11h10l1 4h-12z" fill="#a87420"/></svg>
<svg class="abs" style="left:1221px;top:701px" width="13" height="14" viewBox="0 0 13 14"><rect x="4.5" y="0.8" width="8" height="6.4" fill="#a8d0f4" stroke="#d8e8f8"/><rect x="0.8" y="5" width="8" height="6.4" fill="#78b0ec" stroke="#d8e8f8"/><path d="M2 13.2h6" stroke="#cfe0f4" stroke-width="1.4"/></svg>
<div class="abs" style="left:1241px;top:701px;height:14px;line-height:14px;color:#fff;font-size:11px;letter-spacing:0.3px;white-space:nowrap">20:05</div>
<!-- IME bar -->
<div class="abs" style="left:1138px;top:680px;width:142px;height:16px;background:#fafafa;border-left:1px solid #d8d8d8;box-sizing:border-box"></div>
<svg class="abs" style="left:1139px;top:681px" width="15" height="14" viewBox="0 0 15 14"><rect x="0.8" y="0.8" width="13.4" height="12.4" rx="2.5" fill="#e8602a" transform="rotate(-6 7.5 7)"/><text x="7.5" y="11.2" font-family="Liberation Sans, sans-serif" font-weight="bold" font-size="12" fill="#fff" text-anchor="middle" transform="rotate(-6 7.5 7)">S</text></svg>
<div class="abs" style="left:1158px;top:680px;height:16px;line-height:16px;font-size:13px;font-weight:bold;color:#3f7cc4;font-family:'Liberation Sans','Noto Sans CJK SC',sans-serif">英</div>
<svg class="abs" style="left:1176px;top:682px" width="13" height="12" viewBox="0 0 13 12"><path d="M8.5 0.8A6 6 0 1 1 1 9.2A6.5 6.5 0 0 0 8.5 0.8z" fill="#4a86d0"/></svg>
<svg class="abs" style="left:1196px;top:684px" width="8" height="9" viewBox="0 0 8 9"><circle cx="2" cy="1.8" r="1.2" fill="#3f74b8"/><path d="M5.6 5.2c1 0.4 0.8 2-0.6 3" fill="none" stroke="#3f74b8" stroke-width="1.2"/></svg>
<svg class="abs" style="left:1210px;top:683px" width="17" height="10" viewBox="0 0 17 10"><rect x="0.7" y="0.7" width="15.6" height="8.6" fill="#eaf2fb" stroke="#4a80c4" stroke-width="1.4"/><path d="M3 3.2h11M3 5.2h11" stroke="#4a80c4" stroke-width="1" stroke-dasharray="1.4 1"/><path d="M4.5 7.4h8" stroke="#4a80c4" stroke-width="1"/></svg>
<svg class="abs" style="left:1232px;top:682px" width="9" height="12" viewBox="0 0 9 12"><circle cx="4.5" cy="2.6" r="2.2" fill="#dedede"/><path d="M0.5 11.5V8a4 4 0 0 1 8 0v3.5z" fill="#dedede"/></svg>
<svg class="abs" style="left:1246px;top:682px" width="14" height="12" viewBox="0 0 14 12"><path d="M4 0.6C5.4 2 8.6 2 10 0.6L13.6 3L12 5.6L10.6 4.8V11.4H3.4V4.8L2 5.6L0.4 3z" fill="#3f7fc8"/></svg>
<svg class="abs" style="left:1265px;top:682px" width="13" height="12" viewBox="0 0 13 12"><path d="M12.4 2.8A3.4 3.4 0 0 1 7.8 6.4L2.6 11.4L0.8 9.6L6 4.6A3.4 3.4 0 0 1 9.6 0.4L7.8 2.4L8.4 4.2L10.4 4.8z" fill="#3f7fc8"/></svg>
<!-- mouse cursor -->
<svg class="abs" style="left:253px;top:710px" width="11" height="12" viewBox="0 0 11 12"><path d="M1 0.5V12L4 9.4L6 12h2.5L6.2 8.6L10 8.4z" fill="#fff" stroke="#111" stroke-width="0.9"/></svg>

<!-- ===== title bar contents ===== -->
<svg class="abs" style="left:3.5px;top:3px" width="12" height="12" viewBox="0 0 16 16"><defs><linearGradient id="psg" x1="0" y1="0" x2="0" y2="1"><stop offset="0" stop-color="#4b86d6"/><stop offset="1" stop-color="#143a86"/></linearGradient></defs><rect x="0.5" y="0.5" width="15" height="15" fill="url(#psg)" stroke="#2a58b4"/><text x="8" y="11.5" font-family="Liberation Sans, sans-serif" font-weight="bold" font-size="9" fill="#dbe8ff" text-anchor="middle">Ps</text></svg>
<div class="abs" style="left:1028px;top:0;width:243px;height:2px;background:#f4f6fb"></div>
<div class="wb" style="left:1219px;background:linear-gradient(135deg,#3c78ea,#1246c8);"><div class="abs" style="left:4px;top:10px;width:6px;height:2px;background:#fff"></div></div>
<div class="wb" style="left:1239px;background:linear-gradient(135deg,#3c78ea,#1246c8);"><div class="abs" style="left:6px;top:3px;width:6px;height:5px;border:1px solid #fff;border-top-width:2px;box-sizing:border-box"></div><div class="abs" style="left:3px;top:6px;width:7px;height:6px;border:1px solid #fff;border-top-width:2px;box-sizing:border-box;background:#2458d4"></div></div>
<div class="wb" style="left:1260px;background:linear-gradient(135deg,#ee7a52,#c8381a);"><svg class="abs" style="left:3px;top:2px" width="10" height="10" viewBox="0 0 10 10"><path d="M1 1L9 9M9 1L1 9" stroke="#fff" stroke-width="1.8" stroke-linecap="round"/></svg></div>

<!-- ===== menu bar contents ===== -->
<svg class="abs" style="left:3.5px;top:21px" width="14.5" height="15" viewBox="0 0 17 18"><path d="M1.5 3.5h3v-2h7v2h4v13h-14z" fill="#123a86" stroke="#0b2c6c"/><rect x="4" y="7" width="11" height="9" fill="#1d4fa6"/><text x="9.5" y="14.5" font-family="Liberation Sans, sans-serif" font-weight="bold" font-size="7" fill="#cfe0ff" text-anchor="middle">Ps</text></svg>
<div class="mi" style="left:22px">文件<b>(<u>F</u>)</b></div>
<div class="mi" style="left:70px">编辑<b>(<u>E</u>)</b></div>
<div class="mi" style="left:119px">图像<b>(<u>I</u>)</b></div>
<div class="mi" style="left:167px">图层<b>(<u>L</u>)</b></div>
<div class="mi" style="left:214px">选择<b>(<u>S</u>)</b></div>
<div class="mi" style="left:262px">滤镜<b>(<u>T</u>)</b></div>
<div class="mi" style="left:311px"><b style="margin-left:0;letter-spacing:-0.4px"><u>A</u>nalysis</b></div>
<div class="mi" style="left:364px">视图<b>(<u>V</u>)</b></div>
<div class="mi" style="left:412px">窗口<b>(<u>W</u>)</b></div>
<div class="mi" style="left:460px">帮助<b>(<u>H</u>)</b></div>
<div class="abs" style="left:1253px;top:25px;width:6px;height:5px;border:1px solid #555;border-top-width:2px;box-sizing:border-box"></div>
<div class="abs" style="left:1251px;top:27px;width:6px;height:5px;border:1px solid #555;border-top-width:2px;box-sizing:border-box;background:#f1f1f1"></div>
<svg class="abs" style="left:1268px;top:25px" width="8" height="7" viewBox="0 0 8 7"><path d="M1 0.5L7 6.5M7 0.5L1 6.5" stroke="#444" stroke-width="1.5"/></svg>
<div class="abs" style="left:1133.7px;top:12.7px;height:28px;line-height:28px;color:#e00008;font-family:'Liberation Serif','Noto Serif CJK SC',serif;white-space:nowrap"><span style="font-size:34px;font-weight:bold;position:relative;top:6.5px;letter-spacing:-2.2px">***</span><span style="font-size:24.4px;font-weight:600;margin-left:19px;letter-spacing:5.6px;position:relative;top:0.5px">制作</span></div>

<!-- ===== options bar contents ===== -->
<div class="abs" style="left:0;top:38px;width:1280px;height:1px;background:#d9d9d9"></div>
<div class="abs" style="left:0;top:39px;width:7px;height:25px;background:#dcdcdc"></div>
<svg class="abs" style="left:15px;top:43px" width="18" height="14" viewBox="0 0 18 14"><path d="M16 1.2C12 4 9 6.5 6.8 8.6L8.2 9.8C10.5 7.8 13.5 5 16.6 1.8z" fill="#555"/><path d="M6.6 8.6C5 9.2 3.2 10.6 1.2 12.2 4 12.6 6.6 11.8 8.2 9.9z" fill="#3a3a3a"/></svg>
<div class="dd" style="left:38px;top:49px"></div>
<div class="sep" style="left:50px"></div>
<div class="ol" style="left:58px">画笔:</div>
<svg class="abs" style="left:91px;top:41px" width="15" height="11" viewBox="0 0 15 11"><path d="M1.5 3.2L5.2 0.6L13.4 5.6L12.6 8.4L9.8 10z" fill="#4a4a4a"/><path d="M3 2.6L11 8.6M4.6 1.6L12.4 7M2.4 4L10 9.4" stroke="#bdbdbd" stroke-width="0.6"/></svg>
<div class="t" style="left:95px;top:52px;font-size:8px;line-height:10px;height:10px;color:#333">60</div>
<div class="dd" style="left:113px;top:49px"></div>
<div class="sep" style="left:126px"></div>
<div class="ol" style="left:131.5px">模式:</div>
<div class="fld" style="left:160px;width:107px"><span class="v" style="left:6px;font-size:10.5px">正常</span><div class="ab nod" style="background:linear-gradient(#cfdcfa,#b4c8f4)"></div></div>
<svg class="abs" style="left:256px;top:47px" width="8" height="7" viewBox="0 0 8 7"><path d="M1 1.5L4 4.8L7 1.5" fill="none" stroke="#2c4f9e" stroke-width="1.7"/></svg>
<div class="ol" style="left:274px">不透明度:</div>
<div class="fld" style="left:324px;width:50px"><span class="v">100%</span><div class="ab"></div></div>
<div class="sep" style="left:378px"></div>
<div class="ol" style="left:384px">流量:</div>
<div class="fld" style="left:411px;width:50px"><span class="v">100%</span><div class="ab"></div></div>
<svg class="abs" style="left:468px;top:42px" width="22" height="16" viewBox="0 0 22 16"><path d="M2 13.5C4 11 6.5 7.5 9 5.5L14.5 1.2L15.8 2.6L10.5 7.5C8.5 9.8 5.5 12 2.8 14.2z" fill="#4a4a4a"/><path d="M9.5 11.5C11.5 8.5 13 8.5 13.6 10.5C14.2 12.2 15.6 11.8 17 10.2C18 9 19.2 9.6 20.2 10.8" fill="none" stroke="#444" stroke-width="1.1"/></svg>
<div class="sep" style="left:493px"></div>
<svg class="abs" style="left:739px;top:45px" width="13" height="11" viewBox="0 0 13 11"><rect x="0.5" y="0.5" width="12" height="10" fill="#e6e6e6" stroke="#444"/><rect x="1" y="1" width="11" height="2" fill="#555"/><path d="M2 5h2M2 7h2M2 9h2" stroke="#333"/><path d="M5 5h6M5 7h6M5 9h6" stroke="#888"/></svg>
<div class="sep" style="left:761px"></div>
<svg class="abs" style="left:768px;top:43px" width="20" height="14" viewBox="0 0 20 14"><path d="M0.5 5.5h4l1-1.5h4.5v9h-9.5z" fill="#4a4a4a"/><rect x="3" y="7.5" width="5" height="3.5" fill="#999"/><circle cx="12.5" cy="4.5" r="3.3" fill="#f4f4f4" stroke="#555" stroke-width="1.1"/><path d="M15 7L18.6 10.8" stroke="#333" stroke-width="1.8"/></svg>
<div class="ol" style="left:805px;top:43px">工作区</div>
<div class="dd" style="left:841px;top:48px;border-top-width:4px;border-left-width:4px;border-right-width:4px"></div>
<div class="sep" style="left:859px"></div>

<div class="abs" style="left:168px;top:124.5px;width:72px;height:2px;background:linear-gradient(rgba(190,200,196,0.5),rgba(198,208,204,0.9))"></div>
<!-- ===== watermark ===== -->
<div class="abs" style="left:999px;top:42px;width:252px;height:38px;background:rgba(30,30,30,0.78);"></div>
<div class="abs" style="left:1002px;top:41.5px;height:38px;line-height:36px;white-space:nowrap;font-family:'Liberation Sans','Noto Sans CJK SC',sans-serif;font-weight:bold;color:#d6d6d6;text-shadow:2px 2px 2px #1c1c1c,1px 1px 0 #333;font-size:30px;"><span style="letter-spacing:-0.3px">爱给网</span><span style="font-size:31px;letter-spacing:0.35px;position:relative;top:-1px">|aigei.com</span></div>
</body>
</html>
